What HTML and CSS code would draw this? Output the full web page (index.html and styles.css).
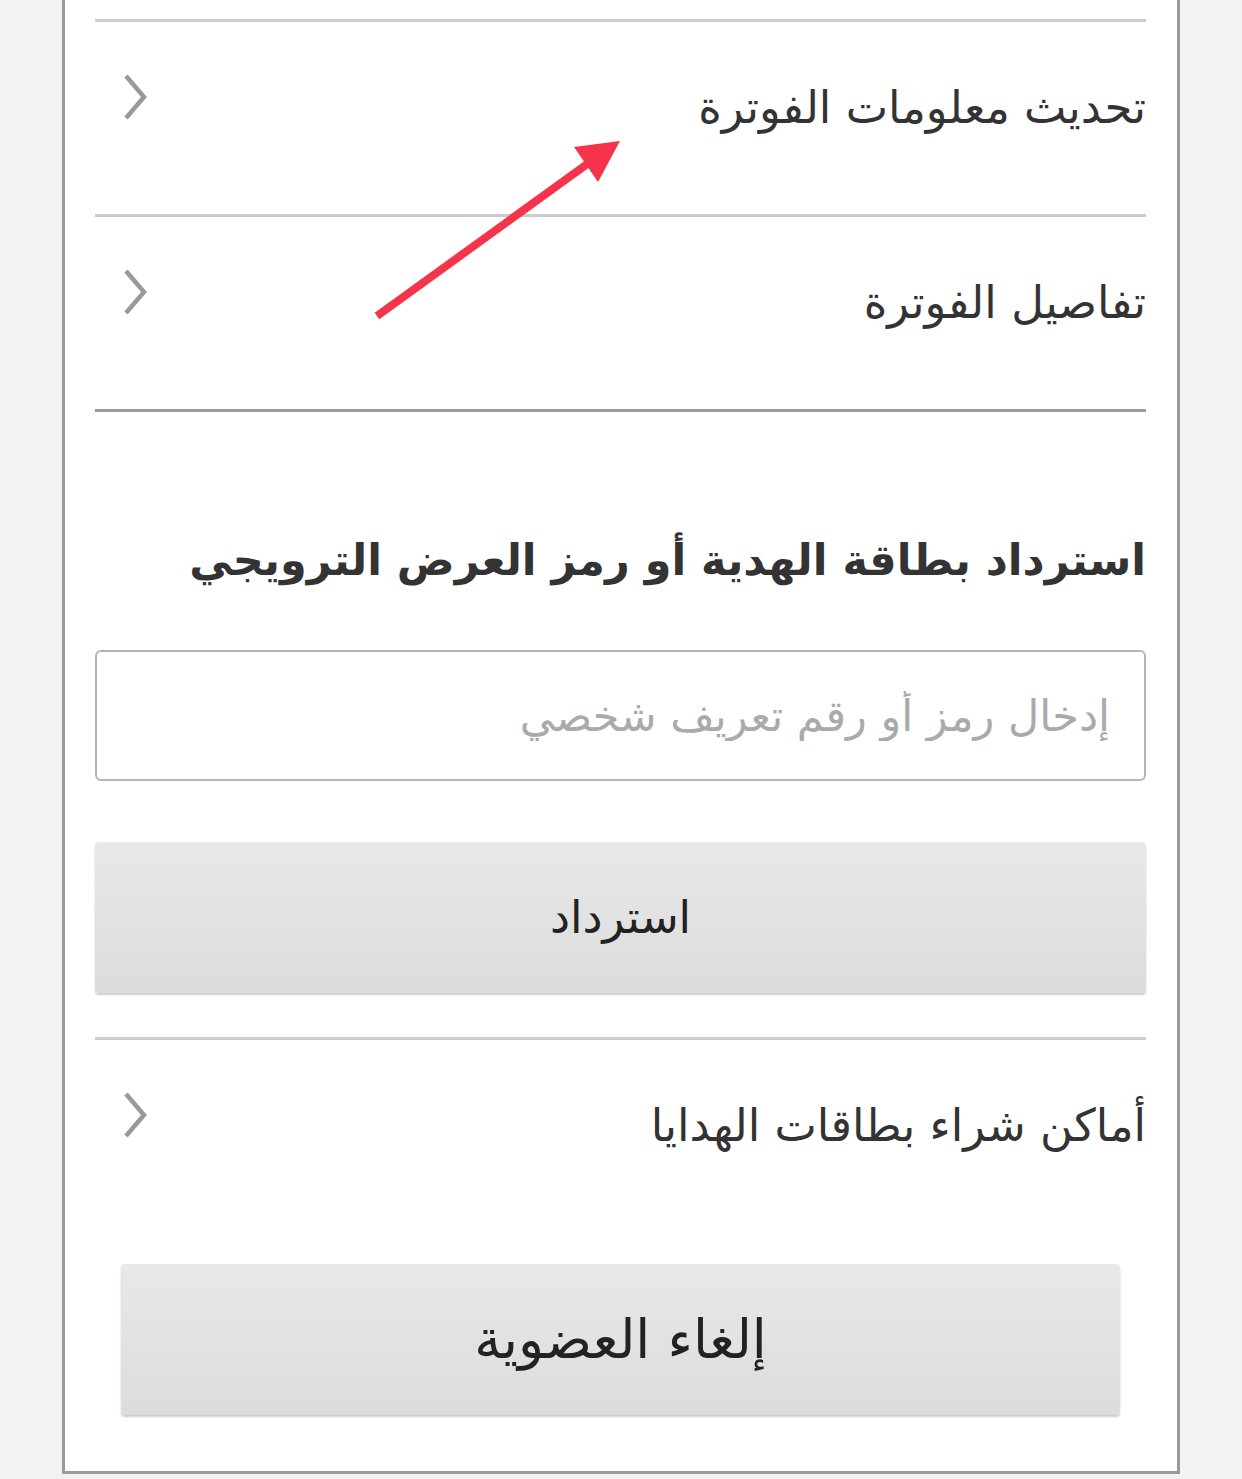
FILE: index.html
```html
<!DOCTYPE html>
<html lang="ar" dir="rtl">
<head>
<meta charset="utf-8">
<link rel="stylesheet" href="styles.css">
</head>
<body>
<div class="panel">
  <ul class="menu">
    <li class="row">
      <span class="row-label">تحديث معلومات الفوترة</span>
      <svg class="chev" width="30" height="48" viewBox="0 0 30 48"><path d="M6 3 L24 24 L6 45" fill="none" stroke="#999" stroke-width="4.5"/></svg>
    </li>
    <li class="row">
      <span class="row-label">تفاصيل الفوترة</span>
      <svg class="chev" width="30" height="48" viewBox="0 0 30 48"><path d="M6 3 L24 24 L6 45" fill="none" stroke="#999" stroke-width="4.5"/></svg>
    </li>
  </ul>
  <section class="redeem">
    <h2 class="redeem-title">استرداد بطاقة الهدية أو رمز العرض الترويجي</h2>
    <input class="code-input" type="text" placeholder="إدخال رمز أو رقم تعريف شخصي">
    <button class="btn btn-wide">استرداد</button>
  </section>
  <ul class="menu menu-bottom">
    <li class="row">
      <span class="row-label">أماكن شراء بطاقات الهدايا</span>
      <svg class="chev" width="30" height="48" viewBox="0 0 30 48"><path d="M6 3 L24 24 L6 45" fill="none" stroke="#999" stroke-width="4.5"/></svg>
    </li>
  </ul>
  <div class="cancel-wrap">
    <button class="btn btn-cancel">إلغاء العضوية</button>
  </div>
</div>
<svg class="annot" width="1242" height="400" viewBox="0 0 1242 400">
  <line x1="377" y1="316" x2="590" y2="162" stroke="#f5334a" stroke-width="8"/>
  <polygon points="620,141 574,147 598,182" fill="#f5334a"/>
</svg>
</body>
</html>
```
FILE: styles.css
```css
* { box-sizing: border-box; }
html, body { margin: 0; padding: 0; }
body {
  background: #f2f2f2;
  font-family: "DejaVu Sans", "Noto Sans", sans-serif;
  height: 1479px;
  overflow: hidden;
  position: relative;
}
.panel {
  position: relative;
  margin-right: 62px;
  width: 1118px;
  height: 1474px;
  background: #fff;
  border: 3px solid #999;
  border-top: none;
  padding: 19px 31px 0 30px;
}
.menu {
  list-style: none;
  margin: 0;
  padding: 0;
}
.row {
  display: flex;
  justify-content: space-between;
  align-items: flex-start;
  height: 195px;
  border-top: 3px solid #ccc;
  padding: 0 0 0 25px;
}
.row-label {
  font-size: 45px;
  color: #333;
  margin-top: 58px;
  line-height: 56px;
}
.chev { margin-top: 51px; }
.redeem {
  border-top: 3px solid #999;
  padding-top: 120px;
}
.redeem-title {
  margin: 0;
  font-size: 43px;
  font-weight: bold;
  color: #333;
  line-height: 56px;
}
.code-input {
  display: block;
  width: 100%;
  height: 131px;
  margin-top: 62px;
  border: 2.5px solid #b5b5b5;
  border-radius: 6px;
  padding: 0 34px;
  font-family: inherit;
  font-size: 43px;
  color: #333;
  background: #fff;
  outline: none;
}
.code-input::placeholder { color: #aaa; }
.btn {
  display: block;
  border: none;
  border-radius: 4px;
  background: linear-gradient(#e8e8e8, #dcdcdc);
  box-shadow: 0 2px 2px rgba(0,0,0,0.2);
  font-family: inherit;
  color: #222;
}
.btn-wide {
  width: 100%;
  height: 151px;
  margin-top: 61px;
  font-size: 45px;
}
.menu-bottom { margin-top: 44px; }
.cancel-wrap {
  padding: 32px 26px 0 26px;
}
.btn-cancel {
  width: 100%;
  height: 151px;
  font-size: 54px;
}
.annot {
  position: absolute;
  left: 0;
  top: 0;
  pointer-events: none;
}
```
